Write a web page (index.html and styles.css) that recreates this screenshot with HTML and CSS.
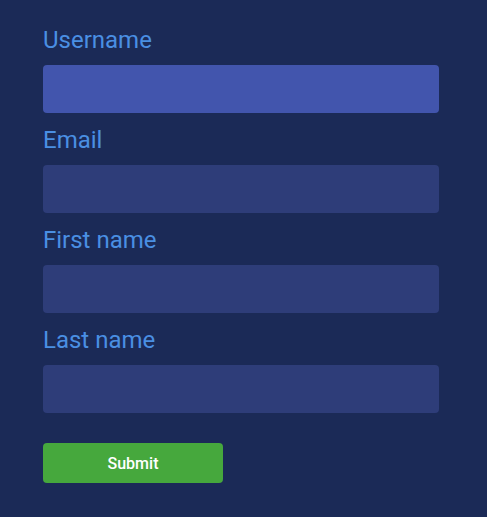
FILE: index.html
```html
<!DOCTYPE html>
<html>
<head>
<meta charset="utf-8">
<link rel="stylesheet" href="styles.css">
</head>
<body>
<form class="form">
  <label class="label" for="u">Username</label>
  <input class="input input-focus" id="u" type="text">
  <label class="label" for="e">Email</label>
  <input class="input" id="e" type="text">
  <label class="label" for="f">First name</label>
  <input class="input" id="f" type="text">
  <label class="label" for="l">Last name</label>
  <input class="input" id="l" type="text">
  <button class="submit" type="button">Submit</button>
</form>
</body>
</html>
```
FILE: styles.css
```css
html, body {
  margin: 0;
  padding: 0;
  background: #1b2a57;
  height: 100%;
}
.form {
  display: flex;
  flex-direction: column;
  align-items: flex-start;
  padding: 27px 0 0 43px;
  font-family: Roboto, "Liberation Sans", sans-serif;
}
.label {
  font-size: 24px;
  line-height: 27px;
  color: #4a8fe3;
  margin-bottom: 11px;
}
.input {
  box-sizing: border-box;
  width: 396px;
  height: 48px;
  border: none;
  border-radius: 4px;
  background: #2e3d79;
  margin: 0 0 14px 0;
  padding: 0 12px;
  outline: none;
}
.input-focus {
  background: #4255ad;
}
.input:last-of-type {
  margin-bottom: 30px;
}
.submit {
  width: 180px;
  height: 40px;
  border: none;
  border-radius: 4px;
  background: #46a83d;
  color: #ffffff;
  font-family: Roboto, "Liberation Sans", sans-serif;
  font-size: 16px;
  font-weight: 500;
  cursor: pointer;
}
```
